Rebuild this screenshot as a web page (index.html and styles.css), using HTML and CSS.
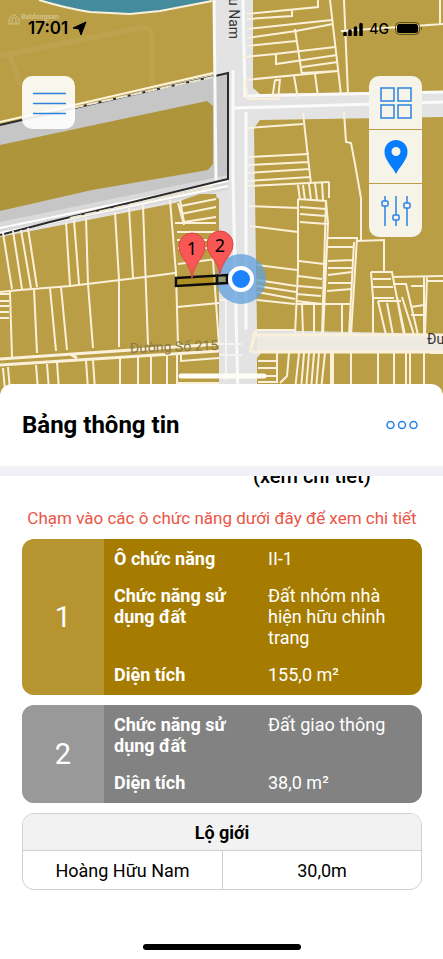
FILE: index.html
```html
<!DOCTYPE html>
<html lang="vi">
  <head>
    <meta charset="utf-8">
    <meta name="viewport" content="width=device-width, initial-scale=1">
    <title>Bảng thông tin</title>
    <link rel="stylesheet" href="styles.css">
  </head>

  <body>

    <section class="map">
      <svg class="map-canvas" viewBox="0 0 443 400" preserveAspectRatio="xMidYMin slice" aria-hidden="true">
        <rect width="443" height="400" fill="#b99e45"/>
        <!-- river -->
        <path d="M39 0 Q65 8 90 12 L130 14 L160 11 L212 0Z" fill="#438b9d"/>
        <path d="M39 0 Q65 8 90 12 L130 14 L160 11 L212 1" fill="none" stroke="#f8f1dc" stroke-width="2"/>
        <path d="M0 56 L140 28 Q152 26 152 40 V85 M10 55 L20 85" fill="none" stroke="#bda350" stroke-width="5"/>

        <!-- roads -->
        <path d="M0 125 L215 74 V0 H253 V88 L260 94 L443 91 V117 L260 120 L254 128 L257 330 L443 334 V351 L262 352 L257 358 V400 H219 V198 L0 237Z" fill="#e3e3e4"/>
        <path d="M257 335 H443 V351 H257Z" fill="#eee9e1"/>
        <path d="M0 126 L228 73 V179 L0 235Z" fill="#c6c6c6"/>
        <path d="M0 145 L207 101 L213 106 V164 L208 170 L92 190 L0 211Z" fill="#ae943a"/>
        <path d="M0 222 L228 175 V190 L0 234Z" fill="#d9d9da"/>
        <path d="M0 228 L228 181 M0 233 L228 186" stroke="#fff" stroke-width="2"/>
        <path d="M0 125 L228 73 V179 L50 222 L0 235" fill="none" stroke="#2a2a2a" stroke-width="2"/>
        <path d="M72 108 L213 77 M70 218 L215 186" stroke="#eee7cf" stroke-width="2" stroke-dasharray="12 3"/>
        <path d="M0 122 L213 73" stroke="#fff5dc" stroke-width="2"/>
        <g fill="none" stroke="#fafafa" stroke-width="3">
          <path d="M214 0 L216 180 M233 70 V180 L238 400 M243 0 L245 96 L443 92"/>
          <path d="M233 108 L443 102 M246 112 V330"/>
        </g>
        <path d="M216 194 H200 L188 198 L175 203 V392 H219 L218 205Z" fill="#b99e45"/>
        <path d="M0 237 L175 203 V392 H0Z" fill="#b99e45"/>

        <g class="parcels">
          <!-- north east -->
          <path d="M247 14 L318 7 V0 M247 19 L292 16 V10 M247 29 L332 20 M247 38 L296 31 L333 24 M247 46 L296 41 M243 57 L275 54 L335 47 M295 29 L302 75 M276 54 V64 L337 55 M302 67 L338 62 M302 73 L338 71 M245 80 L338 71"/>
          <path d="M330 0 L341 95 M344 0 L348 95 M341 31 L443 24 M440 0 V24 M294 76 L298 99 M315 74 L318 97 M275 80 L272 100 M280 79 L278 100 M275 80 H280 M245 80 L248 99 H280"/>
          <path d="M248 128 L303 124 M248 157 L309 154 M248 165 L309 162 M248 173 L310 169 M248 181 L311 177 M248 186 L329 182 M303 113 L311 184 M344 112 L346 142 L351 143 L355 164 L361 198 L361 240"/>
          <path d="M298 185 L300 200 M303 185 L305 200 M309 184 L311 200 M315 183 L317 200 M322 182 L323 200 M329 182 V198"/>
          <!-- east -->
          <path d="M249 206 L299 208 M250 226 L298 232 M257 265 L297 270 M257 280 L296 286 M257 286 L296 292 M257 292 L295 299 M257 300 L295 304 M257 330 H295 M298 199 V270 L295 335 M298 199 L326 201 L328 223 L323 335 M326 201 L322 335 M300 207 L326 209 M300 214 L326 216 M300 222 L327 224 M299 261 L324 264 M298 276 L322 279 M298 286 L322 288 M296 294 L321 296 M296 301 L322 304 M296 304 L350 304 M302 304 L303 335 M314 304 V335 M342 304 V335"/>
          <path d="M328 238 H357 L351 335 M354 242 L349 335 M328 247 H354 M328 261 L353 260 M328 268 H352 M328 275 L352 272 M328 283 H352 M327 291 L352 289"/>
          <path d="M357 241 L384 240 V271 M371 272 H392 L404 335 M371 272 L373 298 V335 M373 279 H391 M373 287 H393 M373 298 H394 M392 277 L443 276 M393 284 H406 L418 335 M378 301 L386 335 M378 301 H401 M387 303 L393 335 M397 297 L405 335 M402 297 L414 335 M411 286 H423 M411 307 L424 305 M411 315 H424 M424 277 V335 M427 277 L425 335 M427 281 H443"/>
          <path class="wide" d="M252 335 H443 M252 352 H443 M256 330 L250 352"/>
          <!-- south east -->
          <path d="M258 361 H276 M258 368 H276 M258 376 H277 M258 382 H277 M277 353 V383 M289 353 L287 376 L280 383 M299 353 L295 390 M304 353 L301 390 M309 353 L306 390 M314 353 L311 390 M319 353 L316 390 M325 353 L321 390 M331 353 V390 M333 353 V390 M351 353 V390 M378 353 V390 M394 353 V390 M406 353 V390 M410 353 V390 M424 353 V390 M430 353 H443"/>
          <!-- west -->
          <path d="M0 292 L20 290 L70 286 L145 277 L175 273 M3 233 L12 289 M13 231 L22 289 M21 230 L31 288 M28 228 L37 287 M66 222 L70 286 M74 220 L79 284 M86 217 L88 284 L93 348 M115 212 L119 280 V347 M129 208 L133 278 M143 205 L148 345 M170 200 L176 273 L178 345 M34 289 L37 353 M50 288 L56 351 M61 287 L67 350 M10 292 L12 357 M0 294 H9 M0 301 H9 M0 306 H9 M0 312 H9 M0 318 H9"/>
          <path class="wide" d="M0 359 L219 344 M0 365 L219 351 M70 354 L77 358"/>
          <path d="M3 368 L5 390 M8 367 L10 390 M36 365 L38 390 M47 364 L49 390 M57 362 L59 390 M86 360 L88 390 M93 360 L95 390 M120 358 V390 M138 357 V390 M151 356 V390 M167 354 V390 M177 353 V384 M181 353 V361 L219 358 M178 383 H219"/>
          <path d="M175 223 H216 M177 232 H216 M177 240 H216 M178 248 H216 M178 264 L216 259 M177 307 L219 303 M178 203 L184 225 M180 200 L184 222 L216 217 M181 206 L216 199 M181 214 L216 207 M213 260 L219 345"/>
        </g>
        <path d="M220 300 H242 M220 344 H242 M220 355 H242 M226 300 V380" fill="none" stroke="#f3f3f3" stroke-width="2"/>
        <path d="M181 376 H264" fill="none" stroke="#fffdf6" stroke-width="5" stroke-linecap="round"/>

        <text class="street" x="130" y="353" fill="#8a7747" transform="rotate(-2 130 353)">Đường Số 215</text>
        <text class="street" x="427" y="344" fill="#333">Đường</text>
        <text class="street" fill="#333" transform="translate(229 -2) rotate(90)">u Nam</text>

        <!-- selected parcel and current position -->
        <circle cx="241" cy="279" r="25" fill="#5fa0dc" fill-opacity=".75"/>
        <path d="M176 278 L227 275 V283 L176 286Z M217 276 V284" fill="#a67d00" fill-opacity=".5" stroke="#0d0d0d" stroke-width="2.500"/>
        <circle cx="241" cy="279" r="11" fill="#1b82fb" stroke="#fff" stroke-width="4"/>
        <g fill="#f95656" stroke="#dc4545" stroke-width="1">
          <path d="M192 278 C190 262 179 258 179 246 A13 13 0 0 1 205 246 C205 258 194 262 192 278Z"/>
          <path d="M220 275 C218 259 207 256 207 244 A13 13 0 0 1 233 244 C233 256 222 259 220 275Z"/>
        </g>
        <text class="pin-label" x="192" y="255">1</text>
        <text class="pin-label" x="220" y="252">2</text>

        <!-- faint watermark -->
        <g fill="none" stroke="#d3c28c" stroke-width="1">
          <path d="M9 19 L14 14 L19 19 V24 H9Z M12 24 V19 L14 17 L16 19 V24"/>
        </g>
        <text class="watermark" x="21" y="19">Batdongsan</text>
      </svg>

      <header class="status">
        <span class="clock">17:01</span>
        <svg width="15" height="15" viewBox="0 0 15 15"><path d="M14 1 L9 14 L7 8 L1 7Z" stroke="#000" stroke-linejoin="round"/></svg>
        <div class="signal">
          <svg width="20" height="14" viewBox="0 0 20 14"><path d="M2 13 V11.500 M7 13 V9 M12.500 13 V6 M18 13 V2.500" stroke="#000" stroke-width="3.500" stroke-linecap="round"/></svg>
          <span>4G</span>
          <svg width="28" height="13" viewBox="0 0 28 13"><rect x=".5" y=".5" width="24" height="12" rx="4" fill="none" stroke="#5d5023"/><rect x="2" y="2" width="21" height="9" rx="2.500"/><path d="M26 4.500 Q28 6.500 26 8.500Z" fill="#5d5023"/></svg>
        </div>
      </header>

      <div class="controls">
        <button class="control menu" aria-label="Menu">
          <svg width="34" height="24" viewBox="0 0 34 24"><path d="M1 2.500 H34 M1 12.500 H34 M1 22.500 H34" stroke="#2f82dc" stroke-width="1.500"/></svg>
        </button>
        <div class="toolbar">
          <button class="control" aria-label="Lớp bản đồ">
            <svg width="32" height="32" viewBox="0 0 32 32" fill="none" stroke="#2a82e4" stroke-width="1.500"><path d="M1 1 H14 V14 H1Z M18 1 H31 V14 H18Z M1 18 H14 V31 H1Z M18 18 H31 V31 H18Z"/></svg>
          </button>
          <button class="control" aria-label="Vị trí">
            <svg width="24" height="34" viewBox="0 0 24 34"><path fill="#087cff" fill-rule="evenodd" d="M12 0 A11.500 11.500 0 0 1 23.500 12 C23.500 20 16 26 12 34 C8 26 .5 20 .5 12 A11.500 11.500 0 0 1 12 0Z M12 7 A4.500 4.500 0 1 0 12 16 A4.500 4.500 0 1 0 12 7Z"/></svg>
          </button>
          <button class="control" aria-label="Bộ lọc">
            <svg width="32" height="32" viewBox="0 0 32 32" fill="none" stroke="#2a82e4" stroke-width="1.500"><path d="M5 1 V6 M5 11 V31 M16 1 V20 M16 25 V31 M27 1 V8 M27 13 V31"/><rect x="2" y="6" width="6" height="5" rx="1"/><rect x="13" y="20" width="6" height="5" rx="1"/><rect x="24" y="8" width="6" height="5" rx="1"/></svg>
          </button>
        </div>
      </div>
    </section>

    <main class="sheet">
      <div class="sheet-head">
        <h1>Bảng thông tin</h1>
        <button class="more" aria-label="Thêm">
          <svg width="32" height="10" viewBox="0 0 32 10" fill="none" stroke="#2a82e4" stroke-width="1.500"><circle cx="4.500" cy="5" r="3.500"/><circle cx="16" cy="5" r="3.500"/><circle cx="27.500" cy="5" r="3.500"/></svg>
        </button>
      </div>

      <div class="scroller">
        <p class="detail">(xem chi tiết)</p>
        <p class="hint">Chạm vào các ô chức năng dưới đây để xem chi tiết</p>

        <button class="zone housing">
          <span class="number">1</span>
          <span class="facts">
            <b>Ô chức năng</b> <span>II-1</span>
            <b>Chức năng sử dụng đất</b> <span>Đất nhóm nhà hiện hữu chỉnh trang</span>
            <b>Diện tích</b> <span>155,0 m²</span>
          </span>
        </button>

        <button class="zone traffic">
          <span class="number">2</span>
          <span class="facts">
            <b>Chức năng sử dụng đất</b> <span>Đất giao thông</span>
            <b>Diện tích</b> <span>38,0 m²</span>
          </span>
        </button>

        <table class="roads">
          <thead>
            <tr><th colspan="2">Lộ giới</th></tr>
          </thead>
          <tbody>
            <tr><td>Hoàng Hữu Nam</td><td>30,0m</td></tr>
          </tbody>
        </table>
      </div>

      <div class="home-bar"></div>
    </main>

  </body>
</html>
```

FILE: styles.css
```css
* {
  box-sizing: border-box;
}
body {
  margin: 0;
  min-height: 100vh;
  display: flex;
  flex-direction: column;
  background-color: #fff;
  color: #000;
  font-family: Roboto, "Liberation Sans", sans-serif;
  font-size: 18px;
  line-height: 21px;
}
button {
  border: 0;
  padding: 0;
  font: inherit;
  cursor: pointer;
}
svg {
  display: block;
}

/* map */
.map {
  position: relative;
  height: 400px;
  overflow: hidden;
}
.map-canvas {
  position: absolute;
  top: 0;
  left: 0;
  width: 100%;
  height: 100%;
}
.parcels path {
  fill: none;
  stroke: #fbf1da;
  stroke-width: 2px;
}
.parcels .wide {
  stroke-width: 3px;
}
.street {
  font-size: 14px;
}
.pin-label {
  font-family: "Noto Sans", sans-serif;
  font-size: 18px;
  text-anchor: middle;
}
.watermark {
  font-size: 7px;
  font-weight: bold;
  fill: #d3c28c;
}

.status {
  position: relative;
  display: flex;
  align-items: center;
  gap: 4px;
  padding: 18px 20px 0 28px;
  font-family: Inter, sans-serif;
}
.clock {
  font-weight: 600;
  font-size: 17px;
}
.signal {
  display: flex;
  align-items: center;
  gap: 6px;
  margin-left: auto;
  font-size: 14px;
  font-weight: 500;
}

.controls {
  position: relative;
  display: flex;
  justify-content: space-between;
  align-items: flex-start;
  padding: 37px 21px 0 22px;
}
.control {
  display: flex;
  align-items: center;
  justify-content: center;
  width: 53px;
  height: 53px;
  background-color: #f6f4e9;
}
.menu {
  border-radius: 10px;
  background-color: rgba(255, 255, 255, 0.9);
}
.toolbar {
  display: flex;
  flex-direction: column;
  gap: 1px;
  border-radius: 10px;
  overflow: hidden;
}

/* bottom sheet */
.sheet {
  position: relative;
  flex: 1;
  display: flex;
  flex-direction: column;
  margin-top: -16px;
  border-radius: 12px 12px 0 0;
  background-color: #fff;
}
.sheet-head {
  display: flex;
  align-items: center;
  justify-content: space-between;
  height: 92px;
  padding: 0 25px 0 22px;
  border-bottom: 10px solid #f1f0f6;
}
.sheet-head h1 {
  margin: 0;
  font-size: 24px;
  line-height: 30px;
}
.more {
  background: none;
}

.scroller {
  display: flex;
  flex-direction: column;
  gap: 10px;
  padding: 0 21px 0 22px;
  overflow: hidden;
}
.detail {
  margin: -10px 0 0 231px;
  font-size: 20px;
  font-weight: 500;
}
.hint {
  margin: 11px 0 0;
  font-size: 17px;
  color: #ea5545;
  text-align: center;
}
.zone {
  display: flex;
  border-radius: 12px;
  overflow: hidden;
  color: #fff;
  text-align: left;
}
.housing {
  background-color: #a67c00;
}
.traffic {
  background-color: #828282;
}
.number {
  display: flex;
  align-items: center;
  justify-content: center;
  width: 82px;
  background-color: rgba(255, 255, 255, 0.19);
  font-size: 29px;
}
.facts {
  flex: 1;
  display: grid;
  grid-template-columns: 1fr 1fr;
  gap: 16px 30px;
  padding: 9px 30px 10px 10px;
}

.roads {
  width: 100%;
  table-layout: fixed;
  border: 1px solid #cfcfcf;
  border-radius: 12px;
  border-spacing: 0;
  overflow: hidden;
  text-align: center;
}
.roads th {
  height: 36px;
  padding: 0;
  background-color: #f2f2f2;
}
.roads td {
  height: 39px;
  padding: 0;
  border-top: 1px solid #cfcfcf;
}
.roads td + td {
  border-left: 1px solid #cfcfcf;
}

.home-bar {
  width: 158px;
  height: 6px;
  margin: auto auto 9px;
  border-radius: 3px;
  background-color: #000;
}
```
